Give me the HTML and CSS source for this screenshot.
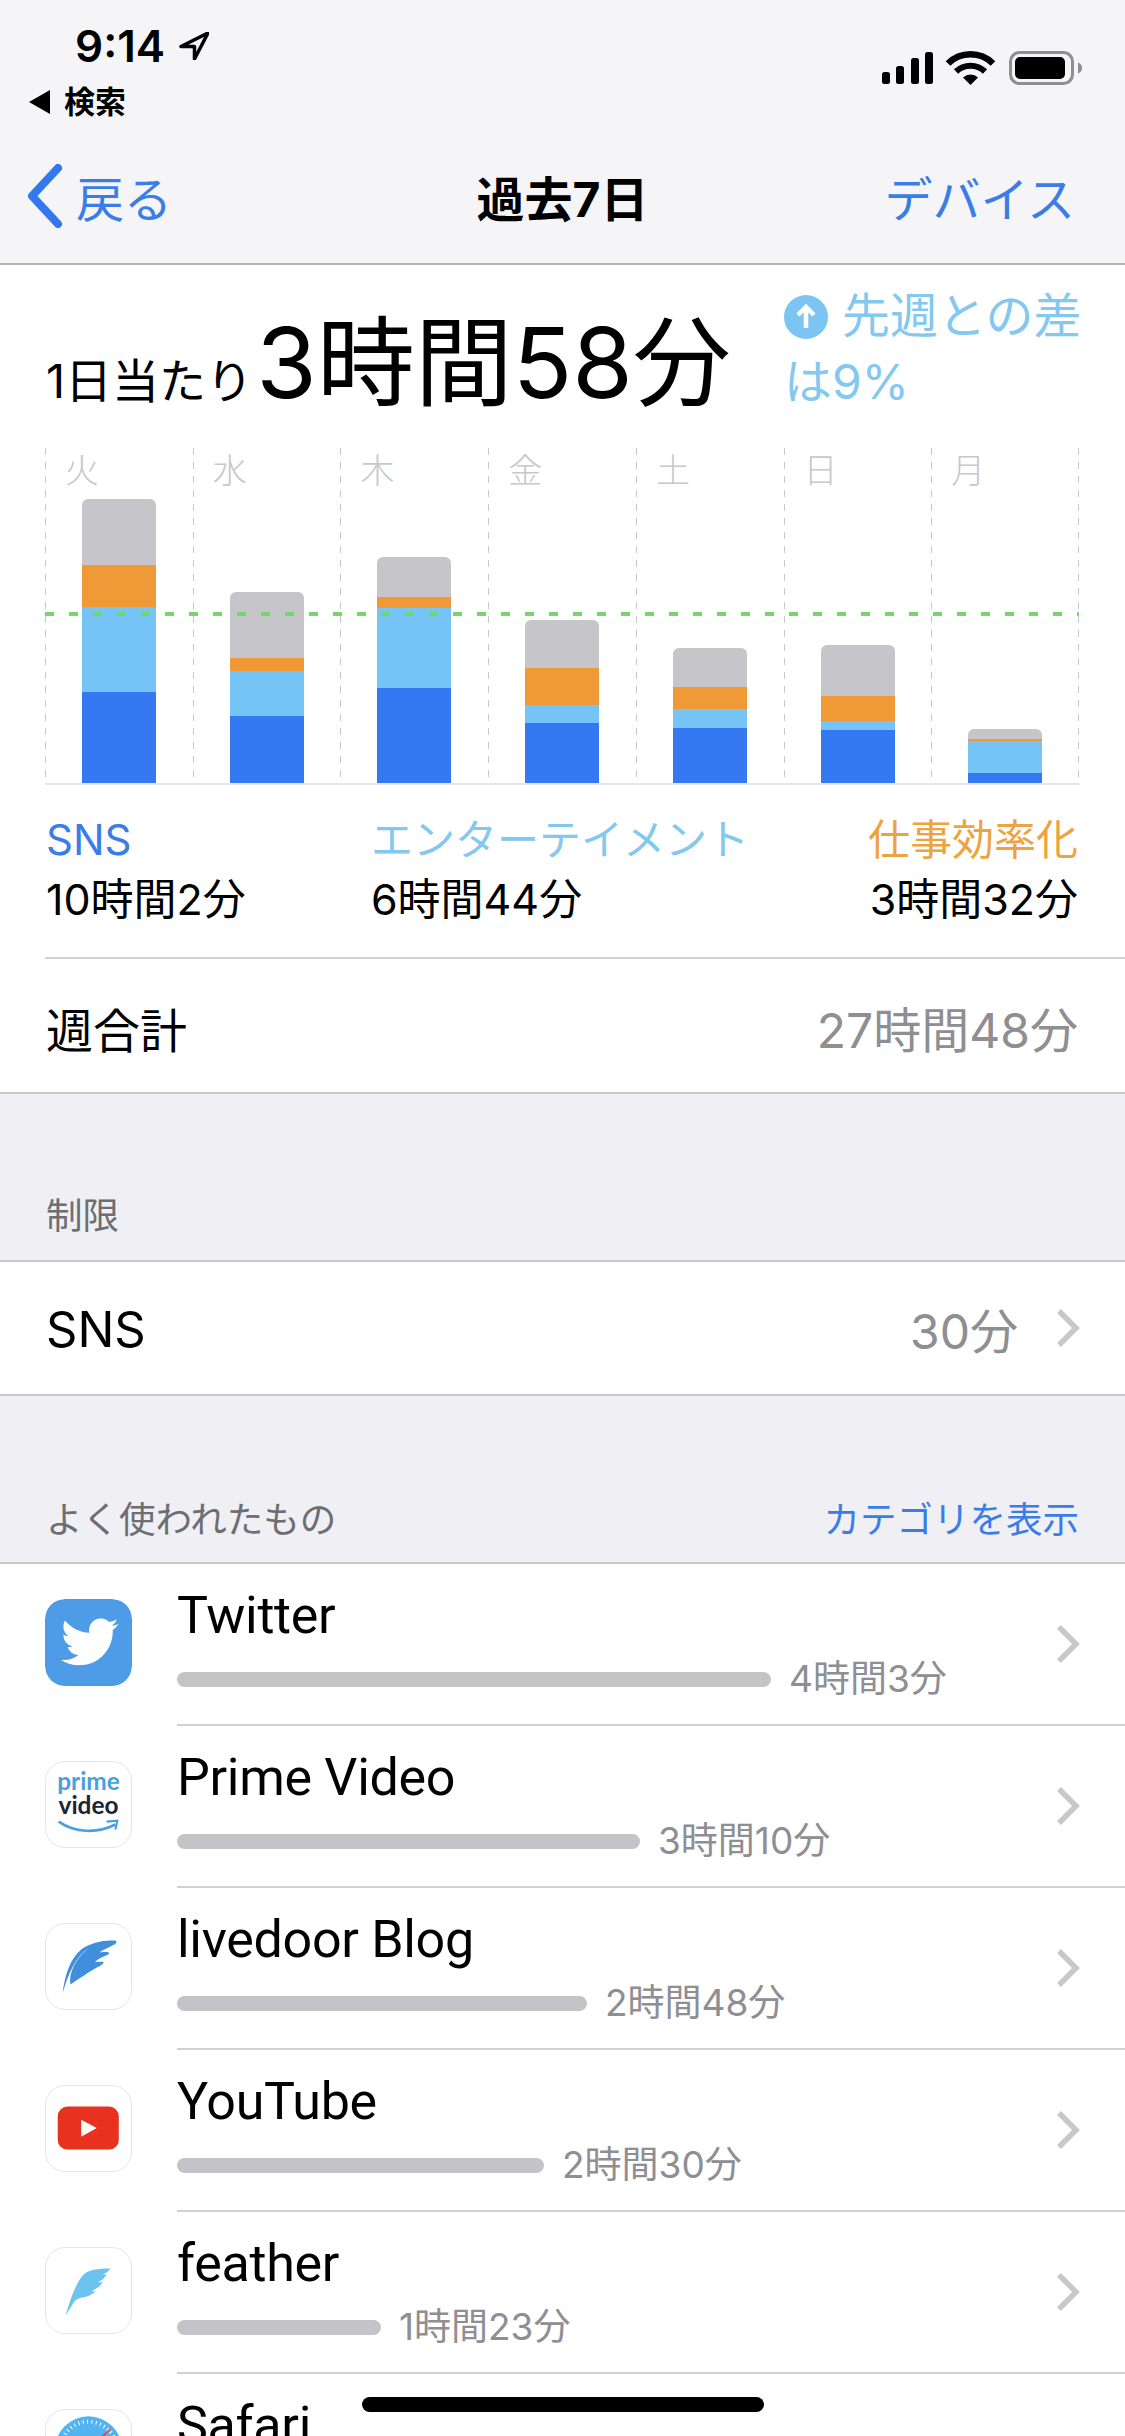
FILE: index.html
```html
<!DOCTYPE html>
<html lang="ja">
<head>
    <meta charset="UTF-8">
    <title>過去7日</title>
    <link rel="stylesheet" href="styles.css">
</head>
<body>
    <div class="phone">
        <!-- Status bar and navigation -->
        <header class="top">
            <div class="status">
                <div class="status-left">
                    <div class="clock">
                        <span>9:14</span>
                        <svg class="loc" viewBox="0 0 30 28"><path d="M29 1 2 14.500h13.500V27z" fill="none" stroke="#000" stroke-width="3.500" stroke-linejoin="round"/></svg>
                    </div>
                    <div class="back-app"><span class="tri"></span>検索</div>
                </div>
                <svg class="status-icons" viewBox="0 0 200 36">
                    <rect x="0" y="21" width="8" height="12" rx="2.500"/>
                    <rect x="14" y="15" width="8" height="18" rx="2.500"/>
                    <rect x="29" y="7" width="8" height="26" rx="2.500"/>
                    <rect x="43" y="1" width="8" height="32" rx="2.500"/>
                    <path d="M66 12.500a32 32 0 0 1 45 0" fill="none" stroke="#000" stroke-width="6.500"/>
                    <path d="M74 20.500a21 21 0 0 1 29 0" fill="none" stroke="#000" stroke-width="6"/>
                    <path d="M81 26.500a11 11 0 0 1 15 0L88.500 34z"/>
                    <rect x="128.500" y="1.500" width="62" height="31" rx="9" fill="none" stroke="#8e8e93" stroke-width="3"/>
                    <rect x="133" y="6" width="50" height="22" rx="5"/>
                    <path d="M196 11.500c3 1 4 3 4 5.500s-1 4.500-4 5.500z" fill="#8e8e93"/>
                </svg>
            </div>
            <nav class="navbar">
                <a class="nav-back">
                    <svg viewBox="0 0 38 64"><path d="M32 4 6 32l26 28" fill="none" stroke="#3478f0" stroke-width="8" stroke-linecap="round" stroke-linejoin="round"/></svg>
                    <span>戻る</span>
                </a>
                <div class="nav-title">過去7日</div>
                <a class="nav-link">デバイス</a>
            </nav>
        </header>

        <!-- Summary and chart -->
        <section class="panel">
            <div class="summary">
                <div class="daily">
                    <span class="per-day">1日当たり</span>
                    <span class="average">3時間58分</span>
                </div>
                <div class="diff"><svg class="diff-icon" viewBox="0 0 44 44"><circle cx="22" cy="22" r="22" fill="#7cc5f2"/><path d="M22 33V13M14 20l8-8 8 8" fill="none" stroke="#fff" stroke-width="4.500"/></svg>先週との差は9%</div>
            </div>

            <div class="chart">
                <div class="day">
                    <span class="day-name">火</span>
                    <div class="bar">
                        <i class="seg gray" style="height:66px"></i><i class="seg orange" style="height:42px"></i><i class="seg light" style="height:85px"></i><i class="seg blue" style="height:91px"></i>
                    </div>
                </div>
                <div class="day">
                    <span class="day-name">水</span>
                    <div class="bar">
                        <i class="seg gray" style="height:66px"></i><i class="seg orange" style="height:13px"></i><i class="seg light" style="height:45px"></i><i class="seg blue" style="height:67px"></i>
                    </div>
                </div>
                <div class="day">
                    <span class="day-name">木</span>
                    <div class="bar">
                        <i class="seg gray" style="height:40px"></i><i class="seg orange" style="height:11px"></i><i class="seg light" style="height:80px"></i><i class="seg blue" style="height:95px"></i>
                    </div>
                </div>
                <div class="day">
                    <span class="day-name">金</span>
                    <div class="bar">
                        <i class="seg gray" style="height:48px"></i><i class="seg orange" style="height:37px"></i><i class="seg light" style="height:18px"></i><i class="seg blue" style="height:60px"></i>
                    </div>
                </div>
                <div class="day">
                    <span class="day-name">土</span>
                    <div class="bar">
                        <i class="seg gray" style="height:39px"></i><i class="seg orange" style="height:22px"></i><i class="seg light" style="height:19px"></i><i class="seg blue" style="height:55px"></i>
                    </div>
                </div>
                <div class="day">
                    <span class="day-name">日</span>
                    <div class="bar">
                        <i class="seg gray" style="height:51px"></i><i class="seg orange" style="height:25px"></i><i class="seg light" style="height:9px"></i><i class="seg blue" style="height:53px"></i>
                    </div>
                </div>
                <div class="day">
                    <span class="day-name">月</span>
                    <div class="bar">
                        <i class="seg gray" style="height:10px"></i><i class="seg orange" style="height:2px"></i><i class="seg light" style="height:32px"></i><i class="seg blue" style="height:10px"></i>
                    </div>
                </div>
                <div class="avg-line"></div>
            </div>

            <div class="legend">
                <div class="legend-item">
                    <div class="legend-name c-blue">SNS</div>
                    <div class="legend-value">10時間2分</div>
                </div>
                <div class="legend-item middle">
                    <div class="legend-name c-light">エンターテイメント</div>
                    <div class="legend-value">6時間44分</div>
                </div>
                <div class="legend-item end">
                    <div class="legend-name c-orange">仕事効率化</div>
                    <div class="legend-value">3時間32分</div>
                </div>
            </div>

            <div class="total">
                <span>週合計</span>
                <span class="muted">27時間48分</span>
            </div>
        </section>

        <!-- Limits -->
        <div class="group-head limit-head">
            <span>制限</span>
        </div>
        <section class="limit">
            <span class="limit-name">SNS</span>
            <span class="limit-value">30分</span>
            <svg class="chev" viewBox="0 0 24 40"><path d="M3 3l17 17L3 37" fill="none" stroke="#c7c7cc" stroke-width="5.500"/></svg>
        </section>

        <!-- Most used -->
        <div class="group-head used-head">
            <span>よく使われたもの</span>
            <a class="show-cat">カテゴリを表示</a>
        </div>
        <section class="apps">
            <div class="app">
                <svg class="app-icon plain" viewBox="0 0 87 87">
                    <rect width="87" height="87" rx="20" fill="#4e9be8"/>
                    <path transform="translate(16 14) scale(2.400)" d="M23.950 4.570a10 10 0 0 1-2.820.770 4.960 4.960 0 0 0 2.160-2.720c-.950.550-2 .950-3.130 1.180a4.920 4.920 0 0 0-8.380 4.480C7.690 8.100 4.070 6.130 1.640 3.160a4.820 4.820 0 0 0-.660 2.470c0 1.710.870 3.210 2.190 4.100a4.900 4.900 0 0 1-2.230-.620v.060a4.920 4.920 0 0 0 3.950 4.830 5 5 0 0 1-2.210.080 4.940 4.940 0 0 0 4.600 3.420A9.870 9.870 0 0 1 0 19.540a14 14 0 0 0 7.560 2.210c9.050 0 14-7.500 14-13.980 0-.210 0-.420-.020-.630a9.900 9.900 0 0 0 2.460-2.550z" fill="#fff"/>
                </svg>
                <div class="app-main">
                    <div class="app-info">
                        <div class="app-name">Twitter</div>
                        <div class="usage"><div class="usage-bar" style="width:594px"></div><span class="usage-time">4時間3分</span></div>
                    </div>
                    <svg class="chev" viewBox="0 0 24 40"><path d="M3 3l17 17L3 37" fill="none" stroke="#c7c7cc" stroke-width="5.500"/></svg>
                </div>
            </div>
            <div class="app">
                <svg class="app-icon" viewBox="0 0 87 87">
                    <text class="prime" x="43.500" y="29" text-anchor="middle">prime</text>
                    <text class="video" x="43.500" y="53" text-anchor="middle">video</text>
                    <path d="M13 61c16 11 38 13 58 3" fill="none" stroke="#4a9fdc" stroke-width="2.800"/>
                    <path d="M62 61l11-1-2 9" fill="none" stroke="#4a9fdc" stroke-width="2.200"/>
                </svg>
                <div class="app-main">
                    <div class="app-info">
                        <div class="app-name">Prime Video</div>
                        <div class="usage"><div class="usage-bar" style="width:463px"></div><span class="usage-time">3時間10分</span></div>
                    </div>
                    <svg class="chev" viewBox="0 0 24 40"><path d="M3 3l17 17L3 37" fill="none" stroke="#c7c7cc" stroke-width="5.500"/></svg>
                </div>
            </div>
            <div class="app">
                <svg class="app-icon" viewBox="0 0 87 87">
                    <path d="M17 71C19 54 24 36 36 26 46 19 60 16 71 17c2 1 1 3-1 4-6 3-11 5-15 8 2 0 5-1 9 0 1 1 0 3-2 3-5 2-9 4-12 7 3 0 6-1 9 0 0 2-2 3-4 4-8 4-15 9-30 19C23 50 30 36 44 24 30 34 23 50 17 71z" fill="#3f8fdc"/>
                </svg>
                <div class="app-main">
                    <div class="app-info">
                        <div class="app-name">livedoor Blog</div>
                        <div class="usage"><div class="usage-bar" style="width:410px"></div><span class="usage-time">2時間48分</span></div>
                    </div>
                    <svg class="chev" viewBox="0 0 24 40"><path d="M3 3l17 17L3 37" fill="none" stroke="#c7c7cc" stroke-width="5.500"/></svg>
                </div>
            </div>
            <div class="app">
                <svg class="app-icon" viewBox="0 0 87 87">
                    <rect x="12" y="21" width="62.500" height="44" rx="10" fill="#e8321f"/>
                    <path d="M36 34.500 52 43 36 52z" fill="#fff"/>
                </svg>
                <div class="app-main">
                    <div class="app-info">
                        <div class="app-name">YouTube</div>
                        <div class="usage"><div class="usage-bar" style="width:367px"></div><span class="usage-time">2時間30分</span></div>
                    </div>
                    <svg class="chev" viewBox="0 0 24 40"><path d="M3 3l17 17L3 37" fill="none" stroke="#c7c7cc" stroke-width="5.500"/></svg>
                </div>
            </div>
            <div class="app">
                <svg class="app-icon" viewBox="0 0 87 87">
                    <path d="M20 69C25 52 30 38 37 29 42 23 49 21 66 21c-2 3-5 5-8 6 2 0 4 0 4 0-2 4-5 6-9 8 2 0 4 0 5 0-3 5-7 7-11 9 1 1 3 0 4 0-5 5-10 6-15 7-3 1-6 2-7 4z" fill="#6cc3ef"/>
                </svg>
                <div class="app-main">
                    <div class="app-info">
                        <div class="app-name">feather</div>
                        <div class="usage"><div class="usage-bar" style="width:204px"></div><span class="usage-time">1時間23分</span></div>
                    </div>
                    <svg class="chev" viewBox="0 0 24 40"><path d="M3 3l17 17L3 37" fill="none" stroke="#c7c7cc" stroke-width="5.500"/></svg>
                </div>
            </div>
            <div class="app">
                <svg class="app-icon" viewBox="0 0 87 87">
                    <circle cx="43.500" cy="41" r="34.500" fill="#52b4f2"/>
                    <circle cx="43.500" cy="41" r="29" fill="none" stroke="#fff" stroke-width="4" stroke-dasharray="1 3.500"/>
                    <path d="M68 17 40 40l6 5z" fill="#d9534f"/>
                </svg>
                <div class="app-main">
                    <div class="app-info">
                        <div class="app-name">Safari</div>
                    </div>
                </div>
            </div>
        </section>

        <div class="home-bar"></div>
    </div>
</body>
</html>
```

FILE: styles.css
```css
/* General Styling */
* {
    box-sizing: border-box;
}

body {
    margin: 0;
    font-family: Inter, 'Noto Sans CJK JP', sans-serif;
    color: #000;
    background-color: #efeff4;
}

.phone {
    position: relative;
    width: 1125px;
    height: 2436px;
    overflow: hidden;
    background-color: #efeff4;
}

/* Status bar + navigation */
.top {
    height: 265px;
    background-color: #f5f5f7;
    border-bottom: 2px solid #b4b4b6;
}

.status {
    height: 130px;
    padding: 22px 43px 0 29px;
    display: flex;
    justify-content: space-between;
}

.clock {
    display: flex;
    align-items: center;
    gap: 14px;
    padding-left: 46px;
    font-size: 44px;
    line-height: 48px;
    font-weight: 600;
}

.loc {
    width: 30px;
    height: 28px;
}

.back-app {
    display: flex;
    align-items: center;
    gap: 14px;
    margin-top: 14px;
    font-size: 31px;
    line-height: 36px;
    font-weight: 700;
}

.tri {
    width: 0;
    height: 0;
    border-top: 12px solid transparent;
    border-bottom: 12px solid transparent;
    border-right: 21px solid #000;
}

.status-icons {
    width: 200px;
    height: 36px;
    margin-top: 29px;
}

.navbar {
    height: 133px;
    padding: 0 50px 2px 26px;
    display: grid;
    grid-template-columns: 1fr auto 1fr;
    align-items: center;
}

.nav-back {
    display: flex;
    align-items: center;
    gap: 12px;
    color: #3b7de8;
    font-size: 48px;
}

.nav-back svg {
    width: 38px;
    height: 64px;
}

.nav-title {
    font-size: 48px;
    font-weight: 700;
    margin-left: 24px;
}

.nav-link {
    color: #3b7de8;
    font-size: 48px;
    text-align: right;
}

/* Summary */
.panel {
    background-color: #fff;
    border-bottom: 2px solid #c8c8cc;
    height: 829px;
}

.summary {
    height: 183px;
    padding: 18px 36px 0 46px;
    display: flex;
    justify-content: space-between;
    align-items: flex-start;
}

.daily {
    display: flex;
    align-items: baseline;
    gap: 3px;
    margin-top: 22px;
}

.per-day {
    font-size: 47px;
    white-space: nowrap;
}

.average {
    font-size: 98px;
    line-height: 116px;
    white-space: nowrap;
}

.diff {
    width: 305px;
    color: #84c8f0;
    font-size: 48px;
    line-height: 66px;
}

.diff-icon {
    width: 44px;
    height: 44px;
    vertical-align: -6px;
    margin-right: 14px;
}

/* Chart */
.chart {
    position: relative;
    display: flex;
    height: 337px;
    margin-left: 45px;
    width: 1036px;
    border-bottom: 2px solid #e5e5ea;
    border-right: 2px solid transparent;
    background-image: repeating-linear-gradient(to bottom, #c8c8cc 0 7px, transparent 7px 14px);
    background-size: 1px 100%;
    background-position: right top;
    background-repeat: no-repeat;
}

.day {
    flex: 1;
    display: flex;
    flex-direction: column;
    justify-content: space-between;
    padding: 0 0 0 37px;
    position: relative;
    background-image: repeating-linear-gradient(to bottom, #c8c8cc 0 7px, transparent 7px 14px);
    background-size: 1px 100%;
    background-repeat: no-repeat;
}

.day-name {
    margin: 3px 0 0 -17px;
    font-size: 34px;
    line-height: 40px;
    font-weight: 300;
    color: #c7c7cc;
}

.bar {
    width: 74px;
    border-radius: 6px 6px 0 0;
    overflow: hidden;
}

.seg {
    display: block;
}

.gray {
    background-color: #c5c5ca;
}

.orange {
    background-color: #ef9a36;
}

.light {
    background-color: #76c3f6;
}

.blue {
    background-color: #3478f2;
}

.avg-line {
    position: absolute;
    left: 0;
    right: 0;
    top: 164px;
    height: 4px;
    background-image: repeating-linear-gradient(to right, #74d66f 0 9px, transparent 9px 24px);
}

/* Legend */
.legend {
    height: 174px;
    margin-left: 45px;
    padding: 27px 47px 0 1px;
    display: flex;
    justify-content: space-between;
    border-bottom: 2px solid #d1d1d6;
}

.legend-item.middle {
    margin-left: 6px;
}

.legend-item.end {
    text-align: right;
}

.legend-name {
    font-size: 42px;
    line-height: 56px;
}

.legend-value {
    font-size: 43px;
    line-height: 56px;
    margin-top: 3px;
}

.c-blue {
    color: #3b7de8;
}

.c-light {
    color: #84c8f0;
}

.c-orange {
    color: #eda340;
}

.total {
    height: 132px;
    padding: 4px 47px 0 46px;
    display: flex;
    align-items: center;
    justify-content: space-between;
    font-size: 47px;
}

.muted {
    color: #8e8e93;
    font-size: 48px;
}

/* Section headers */
.group-head {
    display: flex;
    justify-content: space-between;
    align-items: flex-end;
    padding: 0 46px 18px 46px;
    font-size: 36.500px;
    color: #6d6d72;
    border-bottom: 2px solid #c8c8cc;
}

.limit-head {
    height: 168px;
    padding-bottom: 20px;
}

.used-head {
    height: 168px;
}

.show-cat {
    color: #3b7de8;
}

/* Limit row */
.limit {
    height: 134px;
    padding: 0 45px 0 46px;
    display: flex;
    align-items: center;
    background-color: #fff;
    border-bottom: 2px solid #c8c8cc;
}

.limit-name {
    flex: 1;
    font-size: 49px;
    padding-top: 3px;
}

.limit-value {
    font-size: 48px;
    color: #8e8e93;
    margin-right: 38px;
}

.chev {
    width: 24px;
    height: 40px;
    flex-shrink: 0;
}

/* App list */
.apps {
    background-color: #fff;
    height: 880px;
}

.app {
    height: 162px;
    display: flex;
    padding-left: 45px;
}

.app-icon {
    width: 87px;
    height: 87px;
    margin-top: 35px;
    flex-shrink: 0;
    background-color: #fff;
    border: 1px solid #e5e5ea;
    border-radius: 20px;
}

.app-icon.plain {
    border: 0;
}

.prime {
    font-family: Lato, sans-serif;
    font-weight: 700;
    font-size: 25px;
    fill: #4a9fdc;
}

.video {
    font-family: Lato, sans-serif;
    font-weight: 700;
    font-size: 25px;
    fill: #1a2433;
}

.app-main {
    flex: 1;
    margin-left: 45px;
    padding-right: 45px;
    display: flex;
    align-items: center;
    justify-content: space-between;
    border-bottom: 2px solid #d1d1d6;
}

.app-info {
    align-self: flex-start;
    padding-top: 21px;
}

.app-name {
    font-family: Roboto, sans-serif;
    font-size: 52px;
    letter-spacing: -0.300px;
    line-height: 62px;
}

.usage {
    display: flex;
    align-items: center;
    gap: 18px;
    margin-top: 10px;
}

.usage-bar {
    height: 15px;
    border-radius: 8px;
    background-color: #c4c4c8;
}

.usage-time {
    font-size: 37px;
    line-height: 44px;
    color: #8e8e93;
}

.home-bar {
    position: absolute;
    left: 362px;
    top: 2397px;
    width: 402px;
    height: 15px;
    border-radius: 8px;
    background-color: #000;
}
```
